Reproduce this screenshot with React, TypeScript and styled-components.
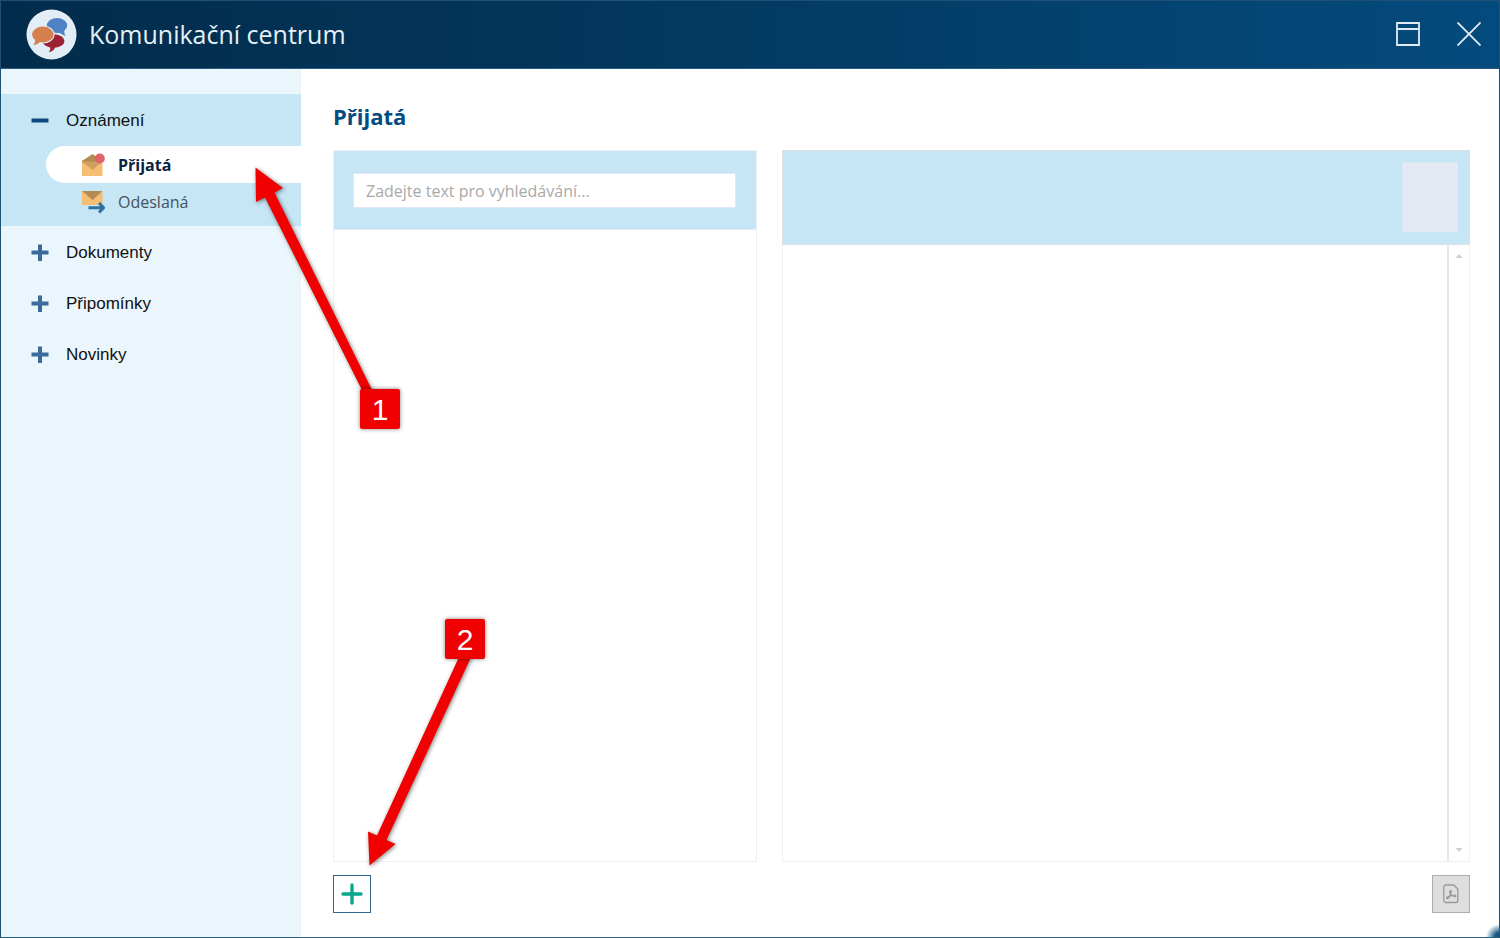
import React from "react";
import styled, { createGlobalStyle, css } from "styled-components";

const GlobalStyle = createGlobalStyle`
  *, *::before, *::after { box-sizing: border-box; }
  body { margin: 0; background: #fff; }
  button, input { font: inherit; }
`;

const Window = styled.div`
  position: relative;
  display: flex;
  flex-direction: column;
  min-height: 100vh;
  border: 1px solid #1f5078;
  border-bottom-color: #2a617f;
  background: #fff;
  font-family: "Open Sans", "Noto Sans", sans-serif;
  overflow: hidden;
`;

const Header = styled.header`
  display: flex;
  align-items: center;
  height: 68px;
  padding: 0 15px 1px 25px;
  background: linear-gradient(90deg, #022c4b 0%, #03355a 35%, #044b7d 100%);
  border-bottom: 1px solid #2a5d86;
  color: #e6f0f7;
`;

const AppTitle = styled.h1`
  flex: 1;
  margin: 0 0 0 12px;
  font-size: 25px;
  line-height: 34px;
  font-weight: 400;
`;

const WindowButtons = styled.div`
  display: flex;
  gap: 31px;
`;

const WindowButton = styled.button`
  display: flex;
  align-items: center;
  justify-content: center;
  width: 30px;
  height: 30px;
  padding: 0;
  border: 0;
  background: none;
  cursor: pointer;
`;

const Body = styled.div`
  display: flex;
  flex: 1;
`;

const Sidebar = styled.nav`
  display: flex;
  flex-direction: column;
  flex: 0 0 300px;
  padding-top: 25px;
  background: #eaf5fc;
`;

const Group = styled.section<{ $open?: boolean }>`
  ${(p) =>
    p.$open &&
    css`
      margin-bottom: 1px;
      padding: 1px 0 6px;
      background: #c6e5f5;
    `}
`;

const GroupToggle = styled.button`
  display: flex;
  align-items: center;
  gap: 17px;
  width: 100%;
  height: 51px;
  padding: 0 30px;
  border: 0;
  background: none;
  color: #111;
  font-family: "Liberation Sans", Arial, sans-serif;
  font-size: 17px;
  text-align: left;
  cursor: pointer;
`;

const SubList = styled.ul`
  margin: 0;
  padding: 0 0 0 45px;
  list-style: none;
`;

const SubLink = styled.a<{ $active?: boolean }>`
  display: flex;
  align-items: center;
  gap: 13px;
  height: 37px;
  padding-left: 35px;
  border-radius: 19px 0 0 19px;
  background: ${(p) => (p.$active ? "#fff" : "transparent")};
  color: ${(p) => (p.$active ? "#0c2340" : "#47525c")};
  font-size: 16px;
  font-weight: ${(p) => (p.$active ? 700 : 400)};
  text-decoration: none;
`;

const Main = styled.main`
  display: flex;
  flex: 1;
  flex-direction: column;
  min-width: 0;
  padding: 31px 29px 24px 32px;
`;

const PageTitle = styled.h2`
  margin: 0 0 18px;
  color: #044b7f;
  font-size: 22px;
  line-height: 32px;
  font-weight: 700;
`;

const Panels = styled.div`
  display: grid;
  grid-template-columns: 424fr 688fr;
  gap: 25px;
  flex: 1;
`;

const Panel = styled.section`
  display: flex;
  flex-direction: column;
  border: 1px solid #ecf0f9;
`;

const SearchBar = styled.div`
  height: 79px;
  padding: 22px 20px 21px 19px;
  border-bottom: 1px solid #e4ecf7;
  background: #c6e5f5;
`;

const SearchInput = styled.input`
  display: block;
  width: 100%;
  height: 35px;
  padding: 0 12px;
  border: 1px solid #dfe9f6;
  background: #fff;
  color: #333;
  font-size: 16px;
  &::placeholder {
    color: #a9a9a9;
    opacity: 1;
  }
`;

const DetailHeader = styled.div`
  display: flex;
  justify-content: flex-end;
  height: 95px;
  margin: -1px -1px 0;
  padding: 11px;
  border: 1px solid #dde1e6;
  background: #c6e5f5;
`;

const Portrait = styled.div`
  width: 56px;
  height: 70px;
  border: 1px solid #dce8f4;
  background: #e4e9f4;
`;

const DetailBody = styled.div`
  display: flex;
  flex: 1;
  justify-content: flex-end;
`;

const ScrollTrack = styled.div`
  display: flex;
  flex-direction: column;
  align-items: center;
  justify-content: space-between;
  width: 22px;
  padding: 8px 0;
  border-left: 2px solid #e6e6e8;
`;

const Actions = styled.footer`
  display: flex;
  justify-content: space-between;
  margin-top: 13px;
`;

const ActionButton = styled.button<{ $muted?: boolean }>`
  display: flex;
  align-items: center;
  justify-content: center;
  width: 38px;
  height: 38px;
  padding: 0;
  border: 1px solid ${(p) => (p.$muted ? "#adadad" : "#35698f")};
  background: ${(p) => (p.$muted ? "#dedede" : "#fff")};
`;

const ResizeCorner = styled.div`
  position: absolute;
  right: 0;
  bottom: 0;
  width: 13px;
  height: 13px;
  background: radial-gradient(circle at 100% 100%, #165584 0 4px, #7fa5c0 8px, transparent 13px);
`;

const Arrows = styled.svg`
  position: absolute;
  top: -1px;
  left: -1px;
  pointer-events: none;
  filter: drop-shadow(1px 1px 2px rgba(0, 0, 0, 0.5));
`;

const Marker = styled.span<{ $x: number; $y: number }>`
  position: absolute;
  left: ${(p) => p.$x}px;
  top: ${(p) => p.$y}px;
  width: 40px;
  height: 40px;
  border-radius: 2px;
  background: #f00000;
  box-shadow: 0 0 4px rgba(0, 0, 0, 0.5);
  color: #fff;
  font-family: "Liberation Sans", Arial, sans-serif;
  font-size: 30px;
  line-height: 42px;
  text-align: center;
`;

const Logo = () => (
  <svg width="51" height="51" viewBox="0 0 51 51" aria-hidden="true">
    <circle cx="25.5" cy="25.5" r="25" fill="#e3edf5" />
    <g fill="#4e82c2">
      <ellipse cx="31" cy="16.500" rx="10.200" ry="7.600" />
      <path d="M31 23c3 .5 5 3 8.800 4-1.500-2-1.800-4-1.300-6.500z" />
    </g>
    <g fill="#9b2335">
      <ellipse cx="27.500" cy="32" rx="11" ry="6.700" />
      <path d="M24 37c.6 2.500.3 4.500-1.200 6 3.700-.4 6-2.500 6.700-5.500z" />
    </g>
    <g stroke="#e3edf5" strokeWidth="2.200">
      <ellipse cx="16.800" cy="25.500" rx="10.700" ry="7.900" />
    </g>
    <g fill="#d67f4f">
      <ellipse cx="16.800" cy="25.500" rx="10.700" ry="7.900" />
      <path d="M9 30c.3 2.500-.2 4.500-1.800 6 3.300-.2 5.300-1.200 7-3.500z" />
    </g>
  </svg>
);

const ToggleIcon = ({ open }: { open?: boolean }) => (
  <svg width="18" height="18" viewBox="0 0 18 18" aria-hidden="true">
    <path d="M2.500 8.500h13" stroke={open ? "#0a477e" : "#3b6b9b"} strokeWidth="4" strokeLinecap="square" />
    {!open && <path d="M9 2.500v12.500" stroke="#3b6b9b" strokeWidth="4" strokeLinecap="square" />}
  </svg>
);

const InboxIcon = () => (
  <svg width="24" height="24" viewBox="0 0 24 24" aria-hidden="true">
    <path d="M1 7.500h20.500V23H1z" fill="#f7be73" />
    <path d="M1 8L11.500 1 21.500 8v1.500H1z" fill="#b48b55" />
    <path d="M1 8.500h20.500L11.500 17z" fill="#cfa062" />
    <circle cx="18.800" cy="5.500" r="5" fill="#e0636b" />
  </svg>
);

const SentIcon = () => (
  <svg width="24" height="24" viewBox="0 0 24 24" aria-hidden="true">
    <path d="M1 1h20.500v14H1z" fill="#f7be73" />
    <path d="M1 1h20.500L11.500 10z" fill="#b48b55" />
    <path d="M7.500 17.700h15M18 13l4.700 4.700-4.700 4.700" fill="none" stroke="#2f719c" strokeWidth="2.900" />
  </svg>
);

const ScrollArrow = ({ down }: { down?: boolean }) => (
  <svg width="8" height="6" viewBox="0 0 8 6" aria-hidden="true">
    <path d={down ? "M0.500 1h7L4 5z" : "M0.500 5h7L4 1z"} fill="#cfcfd1" />
  </svg>
);

const PdfIcon = () => (
  <svg width="18" height="20" viewBox="0 0 18 20" fill="none" stroke="#999" aria-hidden="true">
    <path d="M3.800 1h8l4 4v11.500a2 2 0 0 1-2 2h-10a2 2 0 0 1-2-2V3a2 2 0 0 1 2-2z" strokeWidth="1.300" />
    <path d="M8.500 10c-1.300-2.200-.9-3.600 0-3.600s1.300 1.400 0 3.600zm0 0c1 1.900 2.800 2.700 4.300 2.600 1.200-.1 1-1.600-.5-1.500-1.600 0-4.500.8-6.300 1.600-1.700.8-1.700 2-.9 2 1.300 0 2.800-2.700 3.400-4.700z" strokeWidth="1.300" />
  </svg>
);

const closedGroups = ["Dokumenty", "Připomínky", "Novinky"];

export default function App() {
  return (
    <>
      <GlobalStyle />
      <Window>
        <Header>
          <Logo />
          <AppTitle>Komunikační centrum</AppTitle>
          <WindowButtons>
            <WindowButton aria-label="Maximalizovat">
              <svg width="24" height="24" viewBox="0 0 24 24" fill="none" stroke="#e2edf5" strokeWidth="1.800">
                <path d="M1 1h22v22H1zM1 7h22" />
              </svg>
            </WindowButton>
            <WindowButton aria-label="Zavřít">
              <svg width="24" height="24" viewBox="0 0 24 24" fill="none" stroke="#e2edf5" strokeWidth="1.800">
                <path d="M0.500 0.500l23 23M23.500 0.500l-23 23" />
              </svg>
            </WindowButton>
          </WindowButtons>
        </Header>
        <Body>
          <Sidebar>
            <Group $open>
              <GroupToggle aria-expanded="true">
                <ToggleIcon open />
                Oznámení
              </GroupToggle>
              <SubList>
                <li>
                  <SubLink href="#prijata" $active aria-current="page">
                    <InboxIcon />
                    Přijatá
                  </SubLink>
                </li>
                <li>
                  <SubLink href="#odeslana">
                    <SentIcon />
                    Odeslaná
                  </SubLink>
                </li>
              </SubList>
            </Group>
            {closedGroups.map((name) => (
              <Group key={name}>
                <GroupToggle aria-expanded="false">
                  <ToggleIcon />
                  {name}
                </GroupToggle>
              </Group>
            ))}
          </Sidebar>
          <Main>
            <PageTitle>Přijatá</PageTitle>
            <Panels>
              <Panel>
                <SearchBar>
                  <SearchInput type="text" aria-label="Vyhledávání" placeholder="Zadejte text pro vyhledávání..." />
                </SearchBar>
              </Panel>
              <Panel>
                <DetailHeader>
                  <Portrait />
                </DetailHeader>
                <DetailBody>
                  <ScrollTrack>
                    <ScrollArrow />
                    <ScrollArrow down />
                  </ScrollTrack>
                </DetailBody>
              </Panel>
            </Panels>
            <Actions>
              <ActionButton aria-label="Přidat">
                <svg width="22" height="22" viewBox="0 0 22 22" stroke="#09a78c" strokeWidth="3.400" strokeLinecap="round">
                  <path d="M2 11h18M11 2v18" />
                </svg>
              </ActionButton>
              <ActionButton $muted disabled aria-label="PDF">
                <PdfIcon />
              </ActionButton>
            </Actions>
          </Main>
        </Body>
        <ResizeCorner />
        <Arrows width="500" height="880" viewBox="0 0 500 880" fill="#f00000" aria-hidden="true">
          <path d="M255.500 167.500L283 188 274.500 192.500 373 392H363L265 197.500 256 202z" />
          <path d="M369.500 865.500L368 831.500 377 835.500 459.500 656H471.500L386.500 840 395.500 844z" />
        </Arrows>
        <Marker $x={359} $y={388}>1</Marker>
        <Marker $x={444} $y={618}>2</Marker>
      </Window>
    </>
  );
}
